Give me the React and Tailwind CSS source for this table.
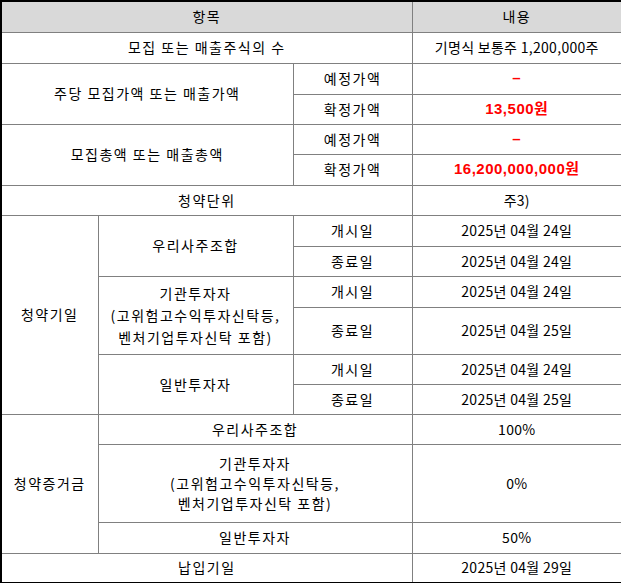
import React from "react";

const cell = "border border-[#808080] text-center align-middle p-0 font-normal";
const num = "border border-[#808080] text-center align-middle p-0 font-normal tracking-[0.3px]";

function Red({ children }) {
  return (
    <span className="text-[#ff0000] font-bold text-[15px] tracking-[0.5px] [font-family:'Liberation_Sans','Noto_Sans_CJK_KR',sans-serif]">
      {children}
    </span>
  );
}

function Lines({ lines, lh }) {
  return (
    <div className={lh}>
      {lines.map((l) => (
        <div key={l}>{l}</div>
      ))}
    </div>
  );
}

const 기관 = ["기관투자자", "(고위험고수익투자신탁등,", "벤처기업투자신탁 포함)"];

export default function App() {
  return (
    <div className="bg-white w-[621px] h-[583px] [font-family:'Noto_Sans_CJK_KR',sans-serif] text-[14px] text-black tracking-[1.5px]">
      <table className="table-fixed border-collapse border-2 border-black w-[621px]">
        <colgroup>
          <col className="w-[97px]" />
          <col className="w-[195px]" />
          <col className="w-[119px]" />
          <col className="w-[210px]" />
        </colgroup>
        <tbody>
          <tr className="h-[31px] bg-[#d9d9d9]">
            <th colSpan={3} className={cell}>항목</th>
            <th className={cell}>내용</th>
          </tr>
          <tr className="h-[31px]">
            <td colSpan={3} className={cell}>모집 또는 매출주식의 수</td>
            <td className={num}>기명식 보통주 1,200,000주</td>
          </tr>
          <tr className="h-[31px]">
            <td colSpan={2} rowSpan={2} className={cell}>주당 모집가액 또는 매출가액</td>
            <td className={cell}>예정가액</td>
            <td className={cell}><Red>–</Red></td>
          </tr>
          <tr className="h-[30px]">
            <td className={cell}>확정가액</td>
            <td className={cell}><Red>13,500원</Red></td>
          </tr>
          <tr className="h-[30px]">
            <td colSpan={2} rowSpan={2} className={cell}>모집총액 또는 매출총액</td>
            <td className={cell}>예정가액</td>
            <td className={cell}><Red>–</Red></td>
          </tr>
          <tr className="h-[31px]">
            <td className={cell}>확정가액</td>
            <td className={cell}><Red>16,200,000,000원</Red></td>
          </tr>
          <tr className="h-[30px]">
            <td colSpan={3} className={cell}>청약단위</td>
            <td className={num}>주3)</td>
          </tr>
          <tr className="h-[31px]">
            <td rowSpan={6} className={cell}>청약기일</td>
            <td rowSpan={2} className={cell}>우리사주조합</td>
            <td className={cell}>개시일</td>
            <td className={num}>2025년 04월 24일</td>
          </tr>
          <tr className="h-[30px]">
            <td className={cell}>종료일</td>
            <td className={num}>2025년 04월 24일</td>
          </tr>
          <tr className="h-[31px]">
            <td rowSpan={2} className={cell}><Lines lines={기관} lh="leading-[22px]" /></td>
            <td className={cell}>개시일</td>
            <td className={num}>2025년 04월 24일</td>
          </tr>
          <tr className="h-[47px]">
            <td className={cell}>종료일</td>
            <td className={num}>2025년 04월 25일</td>
          </tr>
          <tr className="h-[30px]">
            <td rowSpan={2} className={cell}>일반투자자</td>
            <td className={cell}>개시일</td>
            <td className={num}>2025년 04월 24일</td>
          </tr>
          <tr className="h-[30px]">
            <td className={cell}>종료일</td>
            <td className={num}>2025년 04월 25일</td>
          </tr>
          <tr className="h-[30px]">
            <td rowSpan={3} className={cell}>청약증거금</td>
            <td colSpan={2} className={cell}>우리사주조합</td>
            <td className={num}>100%</td>
          </tr>
          <tr className="h-[78px]">
            <td colSpan={2} className={cell}><Lines lines={기관} lh="leading-[20px]" /></td>
            <td className={num}>0%</td>
          </tr>
          <tr className="h-[31px]">
            <td colSpan={2} className={cell}>일반투자자</td>
            <td className={num}>50%</td>
          </tr>
          <tr className="h-[30px]">
            <td colSpan={3} className={cell}>납입기일</td>
            <td className={num}>2025년 04월 29일</td>
          </tr>
        </tbody>
      </table>
    </div>
  );
}
